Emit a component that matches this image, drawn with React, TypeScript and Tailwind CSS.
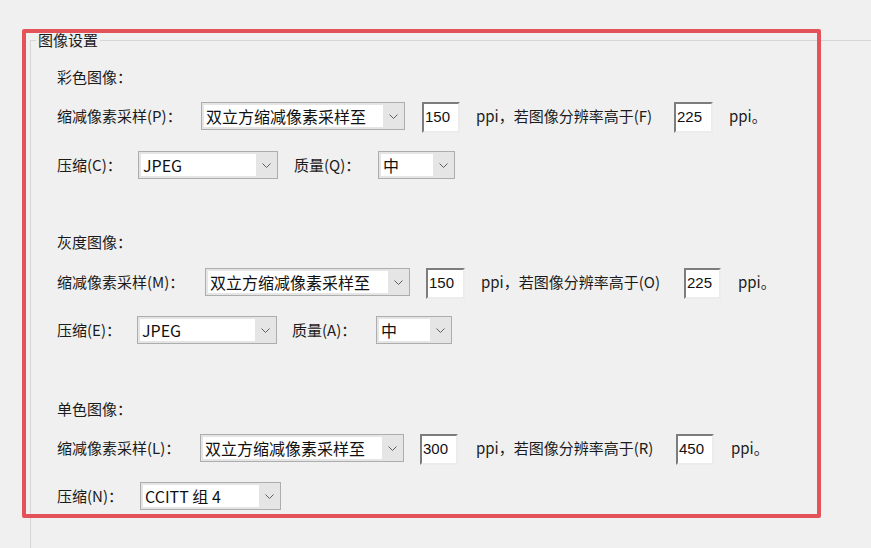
import React from "react"

function Chevron() {
  return (
    <svg width="9" height="5" viewBox="0 0 9 5" fill="none">
      <path d="M0.5 0.5 L4.5 4.5 L8.5 0.5" stroke="#5f5f5f" strokeWidth="1" />
    </svg>
  )
}

function Select({ value, className }: { value: string; className: string }) {
  return (
    <div className={`flex h-[28px] shrink-0 border border-[#adadad] bg-[#e5e5e5] ${className}`}>
      <div className="my-[2px] ml-[2px] flex flex-1 items-center bg-white pl-[2px] text-[16px] leading-[20px] text-[#111]">
        {value}
      </div>
      <div className="flex w-[21px] items-center justify-center">
        <Chevron />
      </div>
    </div>
  )
}

function NumInput({ value, className }: { value: string; className: string }) {
  return (
    <div
      className={`flex h-[31px] shrink-0 items-center self-start border-2 border-t-[#7d7d7d] border-l-[#7d7d7d] border-r-[#ececec] border-b-[#ececec] bg-white pb-[2px] pl-[1px] font-['Liberation_Sans',sans-serif] text-[15px] leading-[18px] text-[#111] ${className}`}
    >
      {value}
    </div>
  )
}

export default function App() {
  return (
    <div className="relative h-[548px] w-[871px] overflow-hidden bg-[#f0f0f0] font-['Noto_Sans_CJK_SC',sans-serif] text-[15px] leading-[20px] text-[#1b1b1b]">
      <div className="pl-[30px] pt-[40px]">
        <div className="relative h-[508px] border-l border-t border-[#d6d6d6] pl-[26px]">
          <span className="absolute -top-[11px] left-[5px] bg-[#f0f0f0] px-[2px] leading-[20px]">图像设置</span>

          {/* 彩色图像 */}
          <div className="mt-[26px] h-[20px]">彩色图像：</div>
          <div className="mt-[15px] flex h-[28px] items-center">
            <span className="w-[144px] shrink-0">缩减像素采样(P)：</span>
            <Select value="双立方缩减像素采样至" className="w-[204px]" />
            <NumInput value="150" className="ml-[17px] w-[38px]" />
            <span className="ml-[16px] w-[198px] shrink-0">ppi，若图像分辨率高于(F)</span>
            <NumInput value="225" className="w-[39px]" />
            <span className="ml-[16px]">ppi。</span>
          </div>
          <div className="mt-[21px] flex h-[28px] items-center">
            <span className="w-[81px] shrink-0">压缩(C)：</span>
            <Select value="JPEG" className="w-[140px]" />
            <span className="ml-[16px] w-[84px] shrink-0">质量(Q)：</span>
            <Select value="中" className="w-[77px]" />
          </div>

          {/* 灰度图像 */}
          <div className="mt-[53px] h-[20px]">灰度图像：</div>
          <div className="mt-[16px] flex h-[28px] items-center">
            <span className="w-[148px] shrink-0">缩减像素采样(M)：</span>
            <Select value="双立方缩减像素采样至" className="w-[205px]" />
            <NumInput value="150" className="ml-[16px] w-[39px]" />
            <span className="ml-[16px] w-[203px] shrink-0">ppi，若图像分辨率高于(O)</span>
            <NumInput value="225" className="w-[37px]" />
            <span className="ml-[17px]">ppi。</span>
          </div>
          <div className="mt-[20px] flex h-[28px] items-center">
            <span className="w-[80px] shrink-0">压缩(E)：</span>
            <Select value="JPEG" className="w-[140px]" />
            <span className="ml-[15px] w-[84px] shrink-0">质量(A)：</span>
            <Select value="中" className="w-[76px]" />
          </div>

          {/* 单色图像 */}
          <div className="mt-[55px] h-[20px]">单色图像：</div>
          <div className="mt-[15px] flex h-[28px] items-center">
            <span className="w-[143px] shrink-0">缩减像素采样(L)：</span>
            <Select value="双立方缩减像素采样至" className="w-[204px]" />
            <NumInput value="300" className="ml-[16px] w-[38px]" />
            <span className="ml-[18px] w-[200px] shrink-0">ppi，若图像分辨率高于(R)</span>
            <NumInput value="450" className="w-[38px]" />
            <span className="ml-[17px]">ppi。</span>
          </div>
          <div className="mt-[20px] flex h-[28px] items-center">
            <span className="w-[83px] shrink-0">压缩(N)：</span>
            <Select value="CCITT 组 4" className="w-[141px]" />
          </div>
        </div>
      </div>

      {/* red highlight */}
      <div className="pointer-events-none absolute left-[22px] top-[29px] h-[489px] w-[799px] rounded-[2px] border-4 border-[#e4525a]" />
    </div>
  )
}
